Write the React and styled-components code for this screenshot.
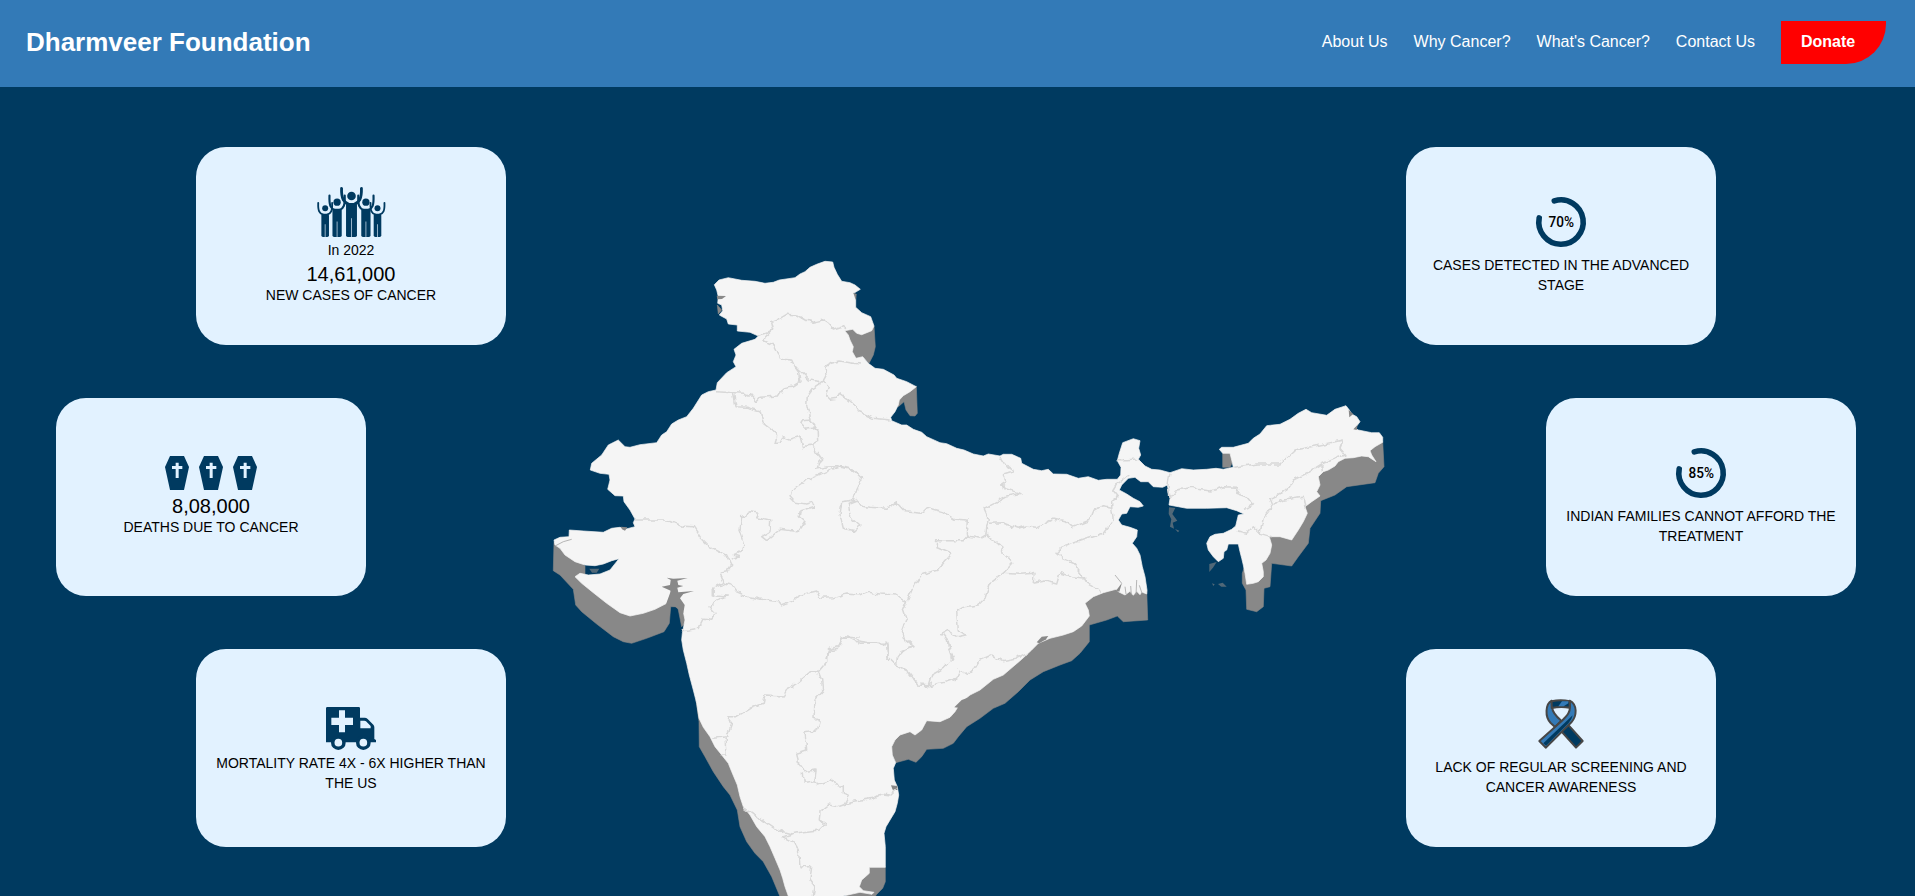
import React from "react";
import styled, { createGlobalStyle } from "styled-components";

const NAVY = "#003a60";
const PALE = "#e2f2ff";
const BLUE = "#337ab7";

const GlobalStyle = createGlobalStyle`
  * { box-sizing: border-box; }
  body {
    margin: 0;
    background: ${NAVY};
    font-family: "Liberation Sans", Arial, sans-serif;
    color: #000;
    overflow: hidden;
  }
`;

const Page = styled.div`
  height: 896px;
  display: flex;
  flex-direction: column;
  overflow: hidden;
`;

const Header = styled.header`
  flex: 0 0 87px;
  padding: 21px 29px 0 26px;
  background: ${BLUE};
  color: #fff;
  display: flex;
  align-items: flex-start;
  justify-content: space-between;
`;

const Brand = styled.h1`
  margin: 0;
  font-size: 26px;
  line-height: 42px;
  font-weight: 700;
`;

const Nav = styled.nav`
  display: flex;
  gap: 26px;
  line-height: 41px;
  font-size: 16px;
`;

const NavLink = styled.a`
  color: #fff;
  text-decoration: none;
`;

const DonateLink = styled(NavLink)`
  height: 43px;
  width: 105px;
  padding-left: 20px;
  background: #f00;
  font-weight: 700;
  border-bottom-right-radius: 40px;
`;

const Stage = styled.main`
  flex: 1;
  display: flex;
`;

const CardColumn = styled.section`
  flex: 0 0 ${(p) => p.$width}px;
  display: flex;
  flex-direction: column;
  gap: 53px;
  padding-top: 60px;
  align-items: ${(p) => (p.$side === "left" ? "flex-end" : "flex-start")};
`;

const Card = styled.article`
  flex: none;
  width: 310px;
  height: 198px;
  padding: ${(p) => p.$top || 0}px 16px ${(p) => p.$bottom || 0}px;
  border-radius: 30px;
  background: ${PALE};
  display: flex;
  flex-direction: column;
  align-items: center;
  justify-content: center;
  text-align: center;
  margin-left: ${(p) => (p.$shift > 0 ? p.$shift : 0)}px;
  margin-right: ${(p) => (p.$shift < 0 ? -p.$shift : 0)}px;
`;

const Caption = styled.p`
  margin: ${(p) => p.$gap || 0}px 0 0;
  font-size: 14px;
  line-height: 20px;
`;

const Figure = styled.strong`
  display: block;
  font-weight: 400;
  font-size: 20px;
  line-height: 25px;
  padding-top: 2px;
  height: 25px;
`;

const Icon = styled.svg`
  display: block;
  flex: none;
  overflow: visible;
`;

const IconRow = styled.div`
  display: flex;
  gap: 10px;
  margin-bottom: 2px;
`;

const Map = styled.svg`
  flex: 0 0 900px;
  height: 809px;
  display: block;
`;

/* ---------- icons ---------- */

const crowd = [
  { cx: 154.5, head: 77, r: 13, reach: 30, top: 54, sh: 98, half: 16.5, w: 8.5 },
  { cx: 111, head: 96, r: 11, reach: 23, top: 76, sh: 116, half: 14, w: 6.5 },
  { cx: 198, head: 96, r: 11, reach: 23, top: 76, sh: 116, half: 14, w: 6.5 },
  { cx: 75, head: 114, r: 9, reach: 21, top: 98, sh: 131, half: 11.5, w: 5.5 },
  { cx: 233, head: 114, r: 9, reach: 21, top: 98, sh: 131, half: 11.5, w: 5.5 },
];

const Arms = ({ cx, top, reach, sh, half, w }) => (
  <path
    d={[-1, 1]
      .map(
        (s) =>
          `M${cx + s * reach},${top} C${cx + s * (reach + 1)},${top + (sh - top) * 0.75} ${cx + s * (half + 6)},${sh - 1} ${cx + s * (half - w)},${sh + w / 2}`
      )
      .join(" ")}
    fill="none"
    stroke={NAVY}
    strokeWidth={w}
    strokeLinecap="round"
  />
);

const CrowdIcon = () => (
  <Icon width="69" height="50" viewBox="51 50 207 151">
    {crowd.map((p) => (
      <g key={p.cx} fill={NAVY}>
        <circle cx={p.cx} cy={p.head} r={p.r} />
        <Arms {...p} />
        <rect x={p.cx - p.half} y={p.sh} width={p.half * 2} height={201 - p.sh} rx="5" />
        <path
          d={`M${p.cx},${p.sh + (201 - p.sh) * 0.45} V202`}
          stroke={PALE}
          strokeWidth="2"
        />
      </g>
    ))}
  </Icon>
);

const CoffinIcon = () => (
  <Icon width="24" height="34" viewBox="0 0 72 102">
    <path d="M15,0 H57 L72,33 L57,102 H15 L0,33 Z" fill={NAVY} />
    <path d="M32,20 H41 V30 H52 V39 H41 V66 H32 V39 H21 V30 H32 Z" fill={PALE} />
  </Icon>
);

const AmbulanceIcon = () => (
  <Icon width="50" height="43" viewBox="48 50 150 129">
    <path
      d="M52,50 H146 Q150,50 150,54 V82 H164 Q169,82 173,86 L190,103 Q193,106 193,111 V146 L198,149 V156 H48 V54 Q48,50 52,50 Z"
      fill={NAVY}
    />
    <path d="M87,60 H105 V82 H129 V104 H105 V126 H87 V104 H64 V82 H87 Z" fill={PALE} />
    <path d="M151,91 H163 Q166,91 168,93 L182,107 V114 H151 Z" fill={PALE} />
    {[85, 160].map((x) => (
      <g key={x}>
        <circle cx={x} cy="157" r="22" fill={NAVY} />
        <circle cx={x} cy="157" r="11.5" fill={PALE} />
      </g>
    ))}
  </Icon>
);

const RingText = styled.text`
  font-family: Roboto, sans-serif;
  font-size: 14.5px;
  font-weight: 500;
  text-anchor: middle;
`;

const RingIcon = ({ label }) => (
  <Icon width="50" height="50" viewBox="0 0 50 50">
    <path
      d="M18.3,3.9 A22.2,22.2 0 1 1 3.2,20.9"
      fill="none"
      stroke={NAVY}
      strokeWidth="5.6"
      strokeLinecap="round"
    />
    <RingText x="25.3" y="30.2" textLength="25.5" lengthAdjust="spacingAndGlyphs">
      {label}
    </RingText>
  </Icon>
);

const RibbonIcon = () => (
  <Icon width="50" height="50" viewBox="50 27 150 150">
    <g stroke="#464646" strokeWidth="6" strokeLinejoin="round">
      <path d="M124,122 L146,104 L190,153 L170,173 Z" fill={NAVY} />
      <path d="M97,32 C78,42 76,80 94,99 L107,111 L126,92 C108,78 99,65 98,50 Z" fill={BLUE} />
      <path
        d="M151,32 C175,44 173,78 156,97 L79,173 L60,153 L128,92 C146,75 152,66 152,50 Z"
        fill={BLUE}
      />
      <path d="M97,34 Q124,27 151,34 V53 Q124,48 97,54 Z" fill={NAVY} />
    </g>
    <path d="M160,76 Q158,88 148,99 L80,167 L72,160 Z" fill={NAVY} />
    <path d="M128,34 H147 V40 L133,49 H117 Z" fill={BLUE} />
  </Icon>
);

/* ---------- map ---------- */

/* Survey sheets: each has its own origin and three units to a pixel. */
const sheets = {
  N: [680, 250],
  W: [540, 420],
  C: [840, 420],
  E: [1090, 390],
  S: [660, 640],
};

const place = (sheet, points) => {
  const [ox, oy] = sheets[sheet];
  return points
    .trim()
    .split(/\s+/)
    .map((pair) => {
      const [x, y] = pair.split(",").map(Number);
      return `${(ox + x / 3).toFixed(1)},${(oy + y / 3).toFixed(1)}`;
    })
    .join(" ");
};

const trace = (parts) => parts.map(([sheet, pts]) => place(sheet, pts)).join(" ");

const land = trace([
  ["N", "103,104 117,90 145,83 185,91 225,94 255,100 280,97 298,90 345,83 360,72 375,65 390,52 410,43 435,34 458,36 462,52 472,73 485,94 510,98 525,105 541,118 521,130 527,140 527,172 545,188 572,200 582,228 575,242 545,254 530,250 518,238 494,242 505,255 510,270 520,290 517,305 528,325 548,320 565,340 585,355 610,358 642,375 650,385 680,395 709,410 690,425 670,437 658,450 655,465 645,485 632,502 635,512 665,525 680,525 700,538 725,547 740,560 780,578"],
  ["C", "320,71 350,85 372,90 400,102 430,108 445,102 480,108 490,103 515,103 542,115 545,130 580,148 605,152 625,148 640,162 680,163 715,175 745,170 775,181 800,178"],
  ["E", "82,268 92,255 93,232 82,212 88,190 98,158 130,146 150,152 146,175 152,195 145,208 165,228 185,238 210,240 240,248 275,236 310,240 350,238 378,235 400,238 430,232 425,210 420,190 398,190 388,178 395,172 430,172 475,160 490,145 510,132 530,107 570,103 600,88 625,70 648,58 665,68 710,76 735,58 768,47 778,60 785,72 800,80 810,95 795,115 805,120 845,128 868,128 878,142 878,157 855,170 840,182 845,195 858,215 835,200 815,198 790,203 765,205 745,215 735,228 715,240 700,245 685,260 690,285 680,305 690,318 665,335 645,350 652,370 640,395 625,420 605,450 570,440 538,440 545,465 540,490 528,510 515,520 520,545 520,560 505,575 490,580 470,583 465,550 460,525 455,505 450,485 445,462 415,462 410,480 402,485 400,505 385,515 370,500 355,480 350,460 360,440 375,433 400,430 425,418 437,408 445,375 462,372 440,362 410,353 350,355 290,355 265,350 237,345 240,325 232,285 218,292 190,290 175,275 152,275 135,262 115,265 95,285 88,300 110,312 130,325 150,335 160,348 145,352 120,350 110,370 95,372 85,390 95,405 120,412 142,420 140,440 127,460 140,475 150,495 157,530 165,560 171,600 170,612 155,606 150,614 140,604 130,616 120,604 105,615 85,605 78,598"],
  ["C", "790,518 760,530 735,550 745,570 748,588 735,605 725,618 700,635 670,645 630,655 595,670 575,690 545,718"],
  ["S", "1065,75 1030,105 1000,118 960,150 930,165 900,190 885,215 870,232 840,245 800,242 785,270 765,285 750,275 720,285 705,300 695,320 697,345 707,368 700,385 703,420 712,440 716,465 712,490 705,515 690,540 678,560 672,580 676,620 676,682 628,682 628,700 605,720 598,740 610,752 642,757 636,763 600,757 550,768 545,790 392,790 385,768 375,740 368,715 360,690 345,655 330,620 315,590 290,560 270,525 250,500 240,470 232,435 215,395 205,370 185,345 165,320 150,290 130,262 117,235 110,190 100,150 88,105 80,70 70,30 65,0"],
  ["W", "427,640 435,600 430,575 405,555 393,530 400,475 390,500 392,520 380,550 345,568 310,580 270,588 240,578 200,550 160,518 125,490 105,470 120,460 145,465 180,462 210,450 237,416 215,422 190,432 165,437 135,435 105,425 75,405 60,385 45,375 42,360 60,352 87,350 88,330 130,333 190,337 215,325 240,322 255,328 285,320 280,308 285,297 270,270 252,245 250,228 225,227 203,208 210,180 207,163 180,160 151,150 155,130 185,105 205,75 235,60 255,80 270,82 300,74 350,68 365,45 380,35 395,12 415,0"],
  ["N", "20,500 40,475 65,435 85,425 108,420 112,398 140,368 168,350 160,335 168,315 162,298 185,280 225,268 235,258 210,247 172,243 172,225 145,222 140,207 118,195 128,182 125,165 113,160 115,140 110,120"],
]);

const cliffs = [
  [["W", "42,365 40,452 60,465 100,508 107,555 125,575 170,612 220,650 250,665 275,670 320,655 372,635 388,610 392,560 413,560 425,620 440,605 445,560 420,500 400,470 370,500 300,540 160,480 135,467 135,438 60,375"]],
  [["N", "490,240 582,228 586,290 580,315 567,340 548,322 525,332"]],
  [["N", "709,408 712,490 705,498 690,497 678,480 672,455 655,470 650,450"]],
  [["N", "112,165 125,180 115,192"]],
  [["C", "920,510 923,600 850,605 832,588 800,600 748,615 748,665 720,700"], ["S", "1235,62 1200,75 1150,95 1110,120 1075,155 1035,190 1000,205 960,235 920,260 895,290 880,310 850,325 800,328 785,350 768,367 745,358 707,368 685,320 740,240 880,170 1080,20"], ["C", "700,590 720,500"]],
  [["E", "878,155 882,230 865,250 855,278 770,290 735,315 692,332 690,370 660,415 655,460 625,500 605,528 545,520 540,590 522,595 520,650 500,665 470,658 468,600 457,580 457,550 480,480 560,420 640,340 690,240 830,170"]],
  [["S", "108,180 117,245 118,320 135,350 160,395 190,440 210,465 232,510 240,560 260,605 285,640 310,665 335,710 362,775 400,775 380,700 300,540 220,380 150,270"]],
  [["S", "625,675 676,680 676,725 668,745 648,765 640,790 535,790 590,735"]],
  [["E", "398,188 424,188 428,215 420,232 398,232"]],
].map(trace);

const islets = [
  [["E", "237,352 256,354 247,372 262,392 248,398 252,416 240,410 244,388 236,372"]],
  [["E", "358,522 380,516 370,532 358,546"]],
  [["E", "384,582 398,578 410,590 394,590"]],
  [["E", "255,417 268,422 264,427"]],
  [["E", "366,580 374,583 370,588"]],
  [["W", "148,446 178,446 170,458 156,458"]],
].map(trace);

const inlets = [
  [["N", "110,137 138,138 126,147 112,148"]],
  [["N", "520,128 530,132 527,150"]],
  [["W", "380,473 400,476 443,474 412,482 415,495 430,498 412,503 415,517 462,513 430,522 420,535 434,555 430,580 405,560 393,557 378,553 390,520 392,512 365,500 390,495 392,480"]],
  [["W", "242,320 262,322 255,332 246,328"]],
  [["C", "590,667 605,650 625,648 618,658 598,670"]],
  [["S", "883,202 905,180 940,167 925,180 895,203"]],
  [["S", "693,436 712,438 712,450 698,449"]],
  [["C", "828,512 846,488 838,515"]],
  [["E", "776,60 790,72 778,82"]],
  [["E", "790,118 803,104 800,120"]],
].map(trace);

const borders = [
  ["N", "108,425 160,428 195,430 210,435 228,455 240,442 295,438 310,415 340,408 360,395 355,365 345,352 335,330 305,328 290,305 280,285 252,272 255,262 278,240 272,215 300,205 320,193 350,195 375,210 400,217 430,210 445,220 460,237 490,228 497,240"],
  ["N", "235,257 255,250 278,240"],
  ["N", "345,352 370,375 385,390 430,395 438,380 435,350 450,340 480,333 510,338 540,342"],
  ["N", "160,428 168,470 200,472 240,482 250,520 275,540 290,555 285,580 300,580 310,560 330,568 360,558 368,590 395,585 413,575 412,545 390,510 380,465 382,440 400,415 430,395"],
  ["N", "390,510 368,512 362,522 375,535 395,532 412,545"],
  ["N", "430,395 445,410 437,435 450,448 470,445 478,430 500,445 530,470 535,485 580,505 632,510"],
  ["N", "395,585 410,605 428,630 405,655 440,648 475,647 525,660"],
  ["W", "895,142 870,150 800,180 755,210 750,230 765,247 800,252 820,247 825,262 780,275 778,290 795,305 775,335 720,328 680,362 665,350 690,335 692,300 650,290 655,280 630,275 605,290 600,330 612,365 610,390 580,405 598,410 575,418"],
  ["C", "0,142 40,147 68,175 50,210 40,240 5,245 0,285 10,325 45,332 60,318 40,300 30,285 25,250 50,240 60,258 90,262 140,265 170,248 195,275 245,280 260,265 310,278 345,298 385,300 382,345"],
  ["W", "285,300 340,300 380,300 420,318 460,320 480,350 510,380 560,405 575,435 560,455 540,460 552,490 520,508 520,525 565,528 540,535 510,560 528,580 515,598 490,595 475,625 445,630 425,632"],
  ["W", "552,490 575,495 590,515 625,530 660,537 715,545 725,558 760,545 780,525 830,513 840,535 880,533 920,522 960,525"],
  ["C", "60,527 85,517 120,522 170,525 200,545 190,570 200,600 187,635 195,660 220,680 180,695 172,720"],
  ["C", "480,110 500,140 522,155 490,165 500,185 485,195 505,208 540,220 500,228 465,248 432,265 448,300 440,320 438,345 420,355 382,348 370,362 290,362 288,382 335,402 310,430 295,450 245,463 220,500 203,540"],
  ["C", "448,310 490,308 535,325 555,318 590,322 640,297 675,305 695,322 750,300 760,275 790,257 815,262 820,300 790,340 735,358 665,382 648,400 665,415 700,430 725,465 735,475 700,470 660,458 650,492 615,483 580,490 582,460 540,463 490,460 518,430 490,400 485,380 440,345"],
  ["C", "490,460 450,490 435,535 415,555 375,560 350,575 355,630 378,645 350,650 320,632 305,640 325,665 335,720"],
  ["C", "725,465 740,490 785,515"],
  ["C", "830,122 860,122 895,120"],
  ["C", "865,165 830,190 818,210 835,230 815,245 815,262"],
  ["C", "0,655 30,655 60,670 100,668 140,675 145,720"],
  ["E", "240,248 234,285 240,325 260,300 305,292 320,298 365,303 400,290 445,292 440,310 470,320 490,345 465,355"],
  ["E", "430,232 500,222 570,222 615,180 690,165 760,150 750,175 765,195 735,205 695,222 650,250 610,270 590,300 540,325 548,345 580,330 640,322 645,350"],
  ["E", "548,345 520,385 510,430 545,440"],
  ["E", "510,430 490,410 470,430 440,422"],
  ["E", "695,222 697,245"],
  ["W", "960,655 910,650 895,680 865,690 858,718"],
  ["S", "535,28 500,35 500,65 475,95 455,95 410,130 380,150 370,168 315,165 310,190 270,205 230,230 200,230 215,250 200,290 160,295"],
  ["S", "195,290 198,345 185,345"],
  ["S", "475,95 485,120 488,155 465,180 462,235 478,240 470,270 435,275 440,330 410,340 415,370 432,395 468,390 465,425 432,430 430,400"],
  ["S", "465,425 475,432 520,418 530,435 550,440 550,460 567,465 550,495 570,485 640,475 665,462 690,465 712,445"],
  ["S", "550,495 535,500 505,495 480,515 478,540 495,550 475,570 430,575 395,582 350,570 320,550 290,530 250,500"],
  ["S", "395,582 370,590 400,605 415,630 420,680 455,680 450,720 465,740 460,768"],
  ["S", "590,2 640,10 680,10 685,50 710,75 745,95 775,135 805,137 860,125 890,115 900,90 920,105 945,85 960,60 995,45 1025,62 1070,55 1100,40"],
  ["S", "710,75 712,50 730,30 765,20 740,0"],
  ["S", "805,137 815,105 850,85 878,55 865,25 862,0"],
].map(([sheet, pts]) => place(sheet, pts));

const creeks = [
  ["C", "845,490 825,465"],
  ["C", "858,522 855,500"],
  ["C", "874,524 872,498"],
  ["C", "888,524 890,480"],
  ["C", "906,520 898,496"],
  ["W", "45,378 70,365 95,358"],
].map(([sheet, pts]) => place(sheet, pts));

const IndiaMap = () => (
  <Map viewBox="506 87 900 809" role="img" aria-label="Map of India">
    <defs>
      <filter id="wiggle" filterUnits="userSpaceOnUse" x="506" y="87" width="900" height="809">
        <feTurbulence type="fractalNoise" baseFrequency="0.14" numOctaves="2" seed="4" />
        <feDisplacementMap in="SourceGraphic" scale="6" xChannelSelector="R" yChannelSelector="G" />
      </filter>
    </defs>
    <g fill="#888" stroke="#888" strokeWidth="0.6" strokeLinejoin="round">
      {cliffs.map((pts) => (
        <polygon key={pts} points={pts} />
      ))}
    </g>
    <g fill="#888" opacity="0.6">
      {islets.map((pts) => (
        <polygon key={pts} points={pts} />
      ))}
    </g>
    <polygon points={land} fill="#f5f5f5" stroke="#f5f5f5" strokeWidth="0.7" strokeLinejoin="round" />
    <g fill="#888">
      {inlets.map((pts) => (
        <polygon key={pts} points={pts} />
      ))}
    </g>
    <g fill="none" stroke="#a5a5a5" strokeWidth="0.8">
      {creeks.map((pts) => (
        <polyline key={pts} points={pts} />
      ))}
    </g>
    <g fill="none" stroke="#d8d8d8" strokeWidth="1.5" strokeLinejoin="round" filter="url(#wiggle)">
      {borders.map((pts) => (
        <polyline key={pts} points={pts} />
      ))}
    </g>
  </Map>
);

/* ---------- page ---------- */

const links = ["About Us", "Why Cancer?", "What's Cancer?", "Contact Us"];

export default function App() {
  return (
    <Page>
      <GlobalStyle />
      <Header>
        <Brand>Dharmveer Foundation</Brand>
        <Nav>
          {links.map((label) => (
            <NavLink key={label}>{label}</NavLink>
          ))}
          <DonateLink>Donate</DonateLink>
        </Nav>
      </Header>
      <Stage>
        <CardColumn $width={506} $side="left">
          <Card>
            <CrowdIcon />
            <Caption $gap={3}>In 2022</Caption>
            <Figure>14,61,000</Figure>
            <Caption>NEW CASES OF CANCER</Caption>
          </Card>
          <Card $shift={-140} $bottom={2}>
            <IconRow>
              <CoffinIcon />
              <CoffinIcon />
              <CoffinIcon />
            </IconRow>
            <Figure>8,08,000</Figure>
            <Caption>DEATHS DUE TO CANCER</Caption>
          </Card>
          <Card $top={3}>
            <AmbulanceIcon />
            <Caption $gap={3}>MORTALITY RATE 4X - 6X HIGHER THAN THE US</Caption>
          </Card>
        </CardColumn>
        <IndiaMap />
        <CardColumn $width={509} $side="right">
          <Card>
            <RingIcon label="70%" />
            <Caption $gap={8}>CASES DETECTED IN THE ADVANCED STAGE</Caption>
          </Card>
          <Card $shift={140}>
            <RingIcon label="85%" />
            <Caption $gap={8}>INDIAN FAMILIES CANNOT AFFORD THE TREATMENT</Caption>
          </Card>
          <Card>
            <RibbonIcon />
            <Caption $gap={8}>LACK OF REGULAR SCREENING AND CANCER AWARENESS</Caption>
          </Card>
        </CardColumn>
      </Stage>
    </Page>
  );
}
